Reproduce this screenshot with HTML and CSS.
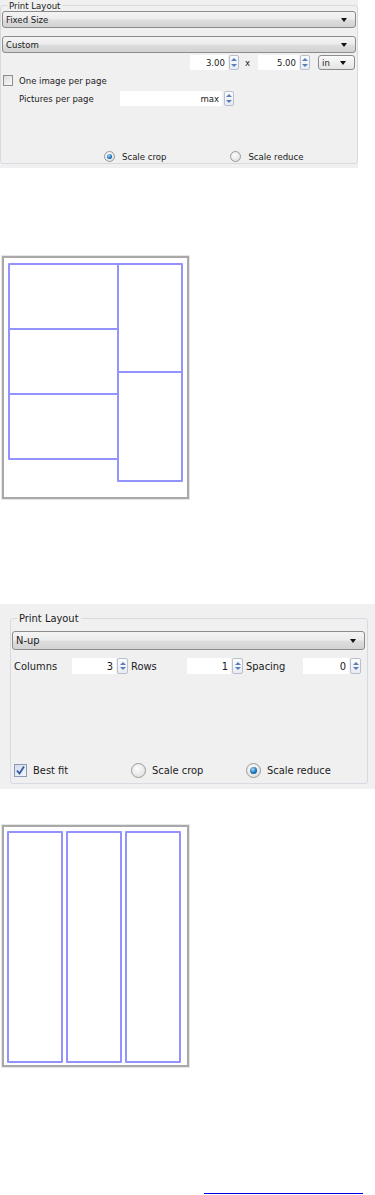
FILE: index.html
```html
<!DOCTYPE html>
<html lang="en">
<head>
    <meta charset="UTF-8">
    <title>Print Layout</title>
    <link rel="stylesheet" href="styles.css">
</head>
<body>
    <!-- Fixed size dialog -->
    <div class="shot shot-fixed">
        <fieldset class="group">
            <legend>Print Layout</legend>
            <div class="combo">Fixed Size<span class="arrow"></span></div>
            <div class="combo combo-second">Custom<span class="arrow"></span></div>
            <div class="size-row">
                <span class="field field-w">3.00</span>
                <span class="spin"><span class="up"></span><span class="down"></span></span>
                <span class="times">x</span>
                <span class="field field-h">5.00</span>
                <span class="spin"><span class="up"></span><span class="down"></span></span>
                <span class="combo combo-unit">in<span class="arrow"></span></span>
            </div>
            <div class="check-row">
                <span class="check"></span>
                <span>One image per page</span>
            </div>
            <div class="per-page">
                <span class="per-label">Pictures per page</span>
                <span class="field field-max">max</span>
                <span class="spin"><span class="up"></span><span class="down"></span></span>
            </div>
            <div class="radios">
                <span class="radio checked"></span>
                <span class="radio-label">Scale crop</span>
                <span class="radio second"></span>
                <span class="radio-label">Scale reduce</span>
            </div>
        </fieldset>
    </div>

    <div class="page page-fixed">
        <div class="col col-left">
            <div class="cell"></div>
            <div class="cell"></div>
            <div class="cell"></div>
        </div>
        <div class="col col-right">
            <div class="cell"></div>
            <div class="cell"></div>
        </div>
    </div>

    <!-- N-up dialog -->
    <div class="shot shot-nup">
        <fieldset class="group">
            <legend>Print Layout</legend>
            <div class="combo">N-up<span class="arrow"></span></div>
            <div class="grid-row">
                <span class="lbl lbl-cols">Columns</span>
                <span class="field field-cols">3</span>
                <span class="spin"><span class="up"></span><span class="down"></span></span>
                <span class="lbl lbl-rows">Rows</span>
                <span class="field field-rows">1</span>
                <span class="spin"><span class="up"></span><span class="down"></span></span>
                <span class="lbl lbl-spacing">Spacing</span>
                <span class="field field-spacing">0</span>
                <span class="spin"><span class="up"></span><span class="down"></span></span>
            </div>
            <div class="bottom-row">
                <span class="check checked">
                    <svg width="11" height="11" viewBox="0 0 11 11"><path d="M2 5.5 L4.5 8.5 L9 1.5" fill="none" stroke="#2f5aa8" stroke-width="1.8"/></svg>
                </span>
                <span class="check-label">Best fit</span>
                <span class="radio"></span>
                <span class="radio-label crop-label">Scale crop</span>
                <span class="radio checked"></span>
                <span class="radio-label">Scale reduce</span>
            </div>
        </fieldset>
    </div>

    <div class="page page-nup">
        <div class="strip"></div>
        <div class="strip"></div>
        <div class="strip"></div>
    </div>

    <a href="#" class="link" aria-label="Print layout"></a>
</body>
</html>
```

FILE: styles.css
```css
body {
    margin: 0;
    background: #fff;
    font-family: "DejaVu Sans Condensed", "Liberation Sans", sans-serif;
    color: #1b1b1b;
}

.shot {
    background: #f0f0f0;
    overflow: hidden;
}

.group {
    border: 1px solid #d5dbe0;
    border-radius: 3px;
    margin: 0;
    padding: 0;
}

.group legend {
    padding: 0 2px;
}

/* combo boxes */
.combo {
    position: relative;
    box-sizing: border-box;
    border: 1px solid #8c8c8c;
    border-radius: 3px;
    background: linear-gradient(#f4f4f4 0%, #ececec 48%, #dedede 52%, #d2d2d2 100%);
    display: flex;
    align-items: center;
    padding-left: 3px;
}

.arrow {
    position: absolute;
    right: 8px;
    top: 50%;
    margin-top: -2px;
    border-left: 3px solid transparent;
    border-right: 3px solid transparent;
    border-top: 4px solid #111;
}

/* spin boxes */
.field {
    background: #fff;
    box-sizing: border-box;
    text-align: right;
    padding-right: 3px;
    display: flex;
    align-items: center;
    justify-content: flex-end;
}

.spin {
    box-sizing: border-box;
    border: 1px solid #b8c0ce;
    border-radius: 2px;
    background: linear-gradient(#fbfcfd, #e8ecf2);
    display: flex;
    flex-direction: column;
    align-items: center;
    justify-content: space-evenly;
}

.spin .up {
    border-left: 3px solid transparent;
    border-right: 3px solid transparent;
    border-bottom: 3px solid #5a7fb8;
}

.spin .down {
    border-left: 3px solid transparent;
    border-right: 3px solid transparent;
    border-top: 3px solid #5a7fb8;
}

/* check / radio */
.check {
    box-sizing: border-box;
    border: 1px solid #8f8f8f;
    background: linear-gradient(135deg, #dcdcdc, #fafafa);
    display: flex;
    align-items: center;
    justify-content: center;
}

.radio {
    box-sizing: border-box;
    border-radius: 50%;
    border: 1px solid #9a9a9a;
    background: radial-gradient(circle at 40% 35%, #fdfdfd, #dadada);
    position: relative;
}

.radio.checked::after {
    content: "";
    position: absolute;
    border-radius: 50%;
    background: radial-gradient(circle at 40% 35%, #a8dcf8, #1d73b8 55%, #0c3f78);
}

/* ---------- fixed size dialog ---------- */
.shot-fixed {
    width: 358px;
    height: 168px;
    font-size: 9.5px;
}

.shot-fixed .group {
    height: 164px;
    box-sizing: border-box;
    padding: 0 1px;
}

.shot-fixed .group legend {
    margin-left: 5px;
    line-height: 11px;
}

.shot-fixed .combo {
    height: 17px;
}

.shot-fixed .combo-second {
    margin-top: 8px;
}

.size-row {
    display: flex;
    align-items: center;
    justify-content: flex-end;
    height: 15px;
    margin-top: 2px;
    padding-right: 1px;
}

.size-row .field {
    height: 15px;
}

.field-w {
    width: 38px;
}

.field-h {
    width: 41px;
    margin-left: 8px;
}

.shot-fixed .spin {
    width: 10px;
    height: 15px;
    margin-left: 1px;
}

.times {
    margin-left: 6px;
}

.shot-fixed .combo-unit {
    width: 37px;
    height: 15px;
    margin: 0 0 0 8px;
    background: linear-gradient(#fafafa, #e4e4e4);
}

.check-row {
    display: flex;
    align-items: center;
    margin-top: 5px;
    height: 11px;
    padding-left: 1px;
    gap: 6px;
}

.check-row .check {
    width: 10px;
    height: 11px;
}

.per-page {
    display: flex;
    align-items: center;
    margin-top: 5px;
    height: 15px;
}

.per-label {
    width: 118px;
    padding-left: 17px;
    box-sizing: border-box;
}

.field-max {
    width: 102px;
    height: 15px;
}

.per-page .spin {
    margin-left: 2px;
}

.shot-fixed .radios {
    display: flex;
    align-items: center;
    margin-top: 44px;
    height: 12px;
    padding-left: 102px;
}

.shot-fixed .radio {
    width: 11px;
    height: 11px;
}

.shot-fixed .radio.checked::after {
    left: 2px;
    top: 2px;
    width: 5px;
    height: 5px;
}

.shot-fixed .radio-label {
    margin-left: 7px;
}

.shot-fixed .radio.second {
    margin-left: 64px;
}

/* ---------- preview pages ---------- */
.page {
    box-sizing: border-box;
    width: 187px;
    border: 2px solid #a9a9a9;
    background: #fff;
    margin-left: 2px;
    box-shadow: 0 0 0 1px #e6e6e6;
    display: flex;
}

.cell,
.strip {
    box-sizing: border-box;
    border: 2px solid #9393ff;
    border-radius: 1px;
}

.page-fixed {
    height: 243px;
    margin-top: 88px;
    padding: 5px 0 0 4px;
    align-items: flex-start;
}

.col-left {
    width: 111px;
}

.col-left .cell {
    height: 67px;
}

.col-left .cell + .cell {
    margin-top: -2px;
}

.col-right {
    width: 66px;
    margin-left: -2px;
}

.col-right .cell:first-child {
    height: 110px;
}

.col-right .cell + .cell {
    height: 111px;
    margin-top: -2px;
}

.page-nup {
    height: 242px;
    margin-top: 36px;
    padding: 4px 0 0 3px;
    gap: 3px;
}

.strip {
    width: 56px;
    height: 232px;
}

/* ---------- N-up dialog ---------- */
.shot-nup {
    width: 375px;
    height: 185px;
    margin-top: 105px;
    font-size: 11px;
    padding-top: 8px;
    box-sizing: border-box;
}

.shot-nup .group {
    margin-left: 10px;
    width: 358px;
    box-sizing: border-box;
    padding: 0 0 5px 0;
}

.shot-nup .group legend {
    margin-left: 6px;
    line-height: 13px;
}

.shot-nup .combo {
    height: 19px;
    margin: 6px 2px 0 1px;
}

.grid-row {
    display: flex;
    align-items: center;
    height: 16px;
    margin-top: 8px;
    padding-left: 3px;
}

.lbl-cols {
    width: 58px;
}

.lbl-rows {
    width: 56px;
}

.lbl-spacing {
    width: 57px;
}

.field-cols,
.field-rows {
    width: 44px;
}

.field-spacing {
    width: 46px;
}

.grid-row .field {
    height: 16px;
}

.grid-row .spin {
    width: 11px;
    height: 16px;
    margin: 0 3px 0 1px;
}

.bottom-row {
    display: flex;
    align-items: center;
    height: 15px;
    margin-top: 89px;
    padding-left: 3px;
}

.bottom-row .check {
    width: 13px;
    height: 13px;
    border-color: #8a9ab5;
    background: linear-gradient(135deg, #d4dcea, #f4f7fb);
}

.check-label {
    margin-left: 6px;
    width: 98px;
}

.bottom-row .radio {
    width: 15px;
    height: 15px;
}

.bottom-row .radio.checked::after {
    left: 3px;
    top: 3px;
    width: 7px;
    height: 7px;
}

.bottom-row .radio-label {
    margin-left: 6px;
}

.bottom-row .crop-label {
    width: 94px;
}

/* ---------- link ---------- */
.link {
    display: block;
    width: 159px;
    height: 0;
    margin: 126px 0 0 204px;
    border-bottom: 1px solid #0000ee;
}
```
